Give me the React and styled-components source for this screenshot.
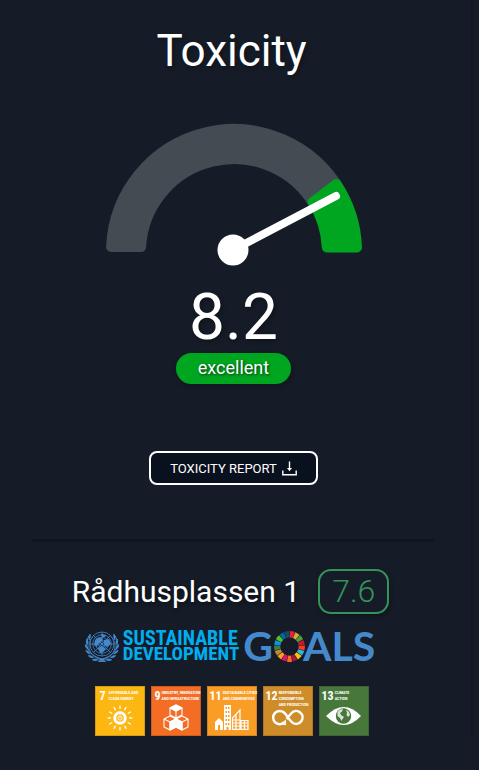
import React from 'react';
import styled, { createGlobalStyle } from 'styled-components';

const GlobalStyle = createGlobalStyle`
  * { box-sizing: border-box; }
  html { background: #151c27; }
  body { margin: 0; font-family: Roboto, "Liberation Sans", sans-serif; color: #fff; }
  h1, h2, p, ul { margin: 0; padding: 0; font-weight: 400; }
`;

const Page = styled.main`
  padding-right: 6px;
`;

const Panel = styled.div`
  border-right: 2px solid #111821;
  padding: 20px 36px 0 32px;
`;

const Section = styled.section`
  display: flex;
  flex-direction: column;
  align-items: center;
`;

const Title = styled.h1`
  padding-right: 4px;
  font-size: 44px;
  line-height: 62px;
  text-shadow: 2px 2px 4px rgba(0, 0, 0, 0.3);
`;

const GaugeDrawing = styled.svg`
  display: block;
  margin-top: 42px;
  overflow: visible;
`;

const Score = styled.p`
  margin-top: 17px;
  font-size: 64px;
  line-height: 70px;
  text-shadow: 2px 2px 4px rgba(0, 0, 0, 0.3);
`;

const Rating = styled.p`
  padding: 0 22px 2px;
  border-radius: 16px;
  background: #00a61f;
  font-size: 18px;
  line-height: 29px;
  text-shadow: 1px 1px 3px rgba(0, 0, 0, 0.7);
  box-shadow: 1px 2px 5px rgba(0, 0, 0, 0.25);
`;

const ReportButton = styled.button`
  display: flex;
  align-items: center;
  gap: 5px;
  height: 34px;
  margin-top: 67px;
  padding: 0 19px;
  border: 2px solid #fff;
  border-radius: 8px;
  background: #0a111e;
  color: #fff;
  font: 400 13px Roboto, "Liberation Sans", sans-serif;
  cursor: pointer;
`;

const Divider = styled.hr`
  height: 3px;
  margin: 54px 0 27px;
  border: 0;
  background: #10161f;
`;

const PlaceRow = styled.div`
  display: flex;
  align-items: center;
  gap: 18px;
  padding-right: 6px;
`;

const PlaceName = styled.h2`
  font-size: 30px;
  line-height: 45px;
  text-shadow: 2px 2px 4px rgba(0, 0, 0, 0.4);
`;

const PlaceScore = styled.p`
  padding: 0 12px;
  border: 2px solid #35935a;
  border-radius: 13px;
  color: #35935a;
  font-size: 32px;
  font-weight: 300;
  line-height: 41px;
  box-shadow: 1px 2px 5px rgba(0, 0, 0, 0.3);
`;

const GoalsLogo = styled.div`
  display: flex;
  align-items: center;
  height: 34px;
  margin-top: 15px;
  padding-right: 8px;
`;

const LogoWords = styled.div`
  display: flex;
  flex-direction: column;
  margin: 0 4px 0 3px;
  color: #00aeef;
  font-family: "Roboto Condensed", Roboto, sans-serif;
  font-weight: 700;
`;

const LogoWord = styled.span`
  font-size: ${(p) => p.$size}px;
  line-height: 16px;
`;

const LogoGoals = styled.div`
  display: flex;
  align-items: center;
  color: #4589cc;
  font-family: Lato, "Open Sans", sans-serif;
  font-size: 41px;
  font-weight: 700;
  line-height: 34px;
`;

const Wheel = styled.svg`
  display: block;
  margin: 0 -2px 0 1px;
`;

const GoalList = styled.ul`
  display: flex;
  gap: 6px;
  margin-top: 23px;
  padding-right: 4px;
  list-style: none;
`;

const GoalTile = styled.li`
  display: flex;
  flex-direction: column;
  width: 50px;
  height: 50px;
  border: 1px solid rgba(0, 0, 0, 0.15);
  background: ${(p) => p.$color};
  font-family: "Roboto Condensed", Roboto, sans-serif;
  font-weight: 700;
`;

const GoalHead = styled.div`
  display: flex;
  gap: ${(p) => p.$gap}px;
  height: 17px;
  padding: 3px 0 0 ${(p) => p.$inset}px;
`;

const GoalNumber = styled.span`
  font-size: 12px;
  line-height: 13px;
`;

const GoalName = styled.span`
  display: flex;
  flex-direction: column;
  font-size: 4px;
  line-height: 6px;
  white-space: nowrap;
`;

const GoalIcon = styled.svg`
  display: block;
  align-self: center;
`;

function Gauge() {
  return (
    <GaugeDrawing width="256" height="142" viewBox="0 0 256 142" role="img" aria-label="Toxicity gauge at 8.2">
      <path d="M5.1 123A123 123 0 0 1 234.5 66.5L208.5 81.5A93 93 0 0 0 35.1 123Z" fill="#454b52" stroke="#454b52" strokeWidth="10" strokeLinejoin="round" />
      <path d="M230.4 59.9A123 123 0 0 1 251 123.4H220.8A93 93 0 0 0 206.6 78.2Z" fill="#00a61f" stroke="#00a61f" strokeWidth="10" strokeLinejoin="round" />
      <path d="M127 126L230 72" stroke="#fff" strokeWidth="8" strokeLinecap="round" />
      <circle cx="127" cy="126" r="15.5" fill="#fff" />
    </GaugeDrawing>
  );
}

function DownloadIcon() {
  return (
    <svg width="15" height="15" viewBox="0 0 15 15" fill="none" stroke="#fff" strokeWidth="1.4" aria-hidden="true">
      <path d="M.8 9.5V13.7H14.2V9.5M7.5 .5V8" />
      <path d="M5 7H10L7.5 10.2Z" fill="#fff" stroke="none" />
    </svg>
  );
}

const leafAngles = [0, 20, 40, 60, 80, 100, 120];

function Emblem() {
  return (
    <svg width="36" height="32" viewBox="-18 -16 36 32" fill="none" stroke="#4589cc" aria-hidden="true">
      <g strokeWidth=".8">
        {[3.5, 6.5, 9.3, 12].map((r) => <circle key={r} cy="-2" r={r} />)}
        <path d="M0-14V10M-12-2H12M-8.5-10.5L8.5 6.5M8.5-10.5L-8.5 6.5" />
      </g>
      <g fill="#4589cc" stroke="none">
        <path d="M-7-6L-3-9L1-7L-1-4L-4-2L-5 1L-8-1ZM2-6L7-7L9-2L5 1L2-1ZM-4 2L0 0L4 3L1 6L-2 7ZM-1-12L4-11L3-9L0-9Z" />
      </g>
      {[1, -1].map((side) => (
        <g key={side} transform={'scale(' + side + ' 1)'} strokeLinecap="round">
          <path d="M13-10C19-1 14 10-3 14" strokeWidth="1" />
          {leafAngles.map((a) => (
            <path key={a} transform={'rotate(' + (a - 34) + ')'} d="M14.2 1.8Q17.2 0 16.5-3.2Q13.8-1 14.2 1.8M13 2Q13.4-.8 12.8-2" strokeWidth=".7" fill="#4589cc" />
          ))}
        </g>
      ))}
    </svg>
  );
}

const wheelColors = [
  '#e5243b', '#dda63a', '#4c9f38', '#c5192d', '#ff3a21', '#26bde2', '#fcc30b', '#a21942', '#fd6925',
  '#dd1367', '#fd9d24', '#bf8b2e', '#3f7e44', '#0a97d9', '#56c02b', '#00689d', '#19486a',
];

function GoalsWheel() {
  const step = 360 / 17;
  return (
    <Wheel width="31" height="31" viewBox="-15.5 -15.5 31 31" role="img" aria-label="O">
      {wheelColors.map((c, i) => (
        <path key={c} d="M-1.5-9L-2.5-15.2Q0-15.6 2.5-15.2L1.5-9Q0-9.3-1.5-9Z" fill={c} transform={'rotate(' + (i + 0.5) * step + ')'} />
      ))}
    </Wheel>
  );
}

const icons = {
  sun: (
    <g stroke="#fff" fill="none">
      <circle cx="15" cy="14" r="5.3" strokeWidth="3" />
      <path d="M13.6 12.4A2.1 2.1 0 1 0 16.4 12.4M15 11V14" strokeWidth="1" />
      {[0, 30, 60, 90, 120, 150, 180, 210, 240, 270, 300, 330].map((a) => (
        <path key={a} d="M15 1.5V5" strokeWidth="1.3" transform={'rotate(' + a + ' 15 14)'} />
      ))}
    </g>
  ),
  cubes: (
    <g stroke="#fff" strokeWidth="1.1" strokeLinejoin="round" fill="none">
      <path d="M15 1L21 4V11L15 14L9 11V4ZM9 4L15 7L21 4M15 7V14" />
      <path d="M9 12L15 15V23L9 26L3 23V15ZM3 15L9 18L15 15M9 18V26" />
      <path d="M21 12L27 15V23L21 26L15 23V15ZM15 15L21 18L27 15M21 18V26" />
      <path d="M15 1L21 4L15 7L9 4ZM9 18L15 15V23L9 26ZM15 15L21 18V26L15 23Z" fill="#fff" />
    </g>
  ),
  city: (
    <g>
      <path fill="#fff" fillRule="evenodd" d="M0 18L4 14L8 18V26H5V21H3V26H0ZM9 1H16V26H9ZM10.5 3V5H12V3ZM13 3V5H14.5V3ZM10.5 7V9H12V7ZM13 7V9H14.5V7ZM10.5 11V13H12V11ZM13 11V13H14.5V11ZM10.5 15V17H12V15ZM13 15V17H14.5V15ZM10.5 19V21H12V19ZM13 19V21H14.5V19ZM11.5 23V26H13.5V23Z" />
      <path stroke="#fff" strokeWidth="1.2" fill="none" d="M17.5 25.4V14L25 6V25.4ZM18 16H25M18 19H25M18 22H25M21 11V25M26 16.5H33V25.4H26ZM26 19H33M26 22H33M29.5 17V25" />
    </g>
  ),
  loop: (
    <g fill="none" stroke="#fff" strokeWidth="2.5">
      <path d="M13.4 18.2A6.6 6.6 0 1 1 13 8.5C16 11 18.5 17 22 19A6.4 6.4 0 1 0 20.5 9L15.5 15" />
      <path d="M9.4 20.2L15 15.4V21.2Z" fill="#fff" stroke="none" />
    </g>
  ),
  eye: (
    <g>
      <path d="M0 12Q18-6 35 12Q18 30 0 12Z" fill="#fff" />
      <circle cx="17.5" cy="12" r="7.7" fill="#48773c" />
      <path d="M11.5 8L13.5 5.8L17 5L16 7.5L14 9L15 11L18 13L16.5 15L15.5 17L14 14L11.5 12ZM20 5.5L23 8L24 11L22 13L20.5 11L21 9Z" fill="#fff" opacity=".8" />
    </g>
  ),
};

const goals = [
  { n: 7, color: '#fdb713', lines: ['AFFORDABLE AND', 'CLEAN ENERGY'], icon: 'sun', w: 30, inset: 4, gap: 3 },
  { n: 9, color: '#f36d25', lines: ['INDUSTRY, INNOVATION', 'AND INFRASTRUCTURE'], icon: 'cubes', w: 30, inset: 3, gap: 1 },
  { n: 11, color: '#f99d26', lines: ['SUSTAINABLE CITIES', 'AND COMMUNITIES'], icon: 'city', w: 34, inset: 2, gap: 1 },
  { n: 12, color: '#cf8d2a', lines: ['RESPONSIBLE', 'CONSUMPTION', 'AND PRODUCTION'], icon: 'loop', w: 34, inset: 2, gap: 1 },
  { n: 13, color: '#48773c', lines: ['CLIMATE', 'ACTION'], icon: 'eye', w: 36, inset: 2, gap: 1 },
];

export default function App() {
  return (
    <Page>
      <GlobalStyle />
      <Panel>
        <Section>
          <Title>Toxicity</Title>
          <Gauge />
          <Score>8.2</Score>
          <Rating>excellent</Rating>
          <ReportButton type="button">
            TOXICITY REPORT
            <DownloadIcon />
          </ReportButton>
        </Section>
        <Divider />
        <Section>
          <PlaceRow>
            <PlaceName>Rådhusplassen 1</PlaceName>
            <PlaceScore>7.6</PlaceScore>
          </PlaceRow>
          <GoalsLogo>
            <Emblem />
            <LogoWords>
              <LogoWord $size={20}>SUSTAINABLE</LogoWord>
              <LogoWord $size={19}>DEVELOPMENT</LogoWord>
            </LogoWords>
            <LogoGoals>
              <span>G</span>
              <GoalsWheel />
              <span>ALS</span>
            </LogoGoals>
          </GoalsLogo>
          <GoalList>
            {goals.map((g) => (
              <GoalTile key={g.n} $color={g.color}>
                <GoalHead $gap={g.gap} $inset={g.inset}>
                  <GoalNumber>{g.n}</GoalNumber>
                  <GoalName>
                    {g.lines.map((line) => <span key={line}>{line}</span>)}
                  </GoalName>
                </GoalHead>
                <GoalIcon width={g.w} height="28" viewBox={'0 0 ' + g.w + ' 28'} aria-hidden="true">
                  {icons[g.icon]}
                </GoalIcon>
              </GoalTile>
            ))}
          </GoalList>
        </Section>
      </Panel>
    </Page>
  );
}
